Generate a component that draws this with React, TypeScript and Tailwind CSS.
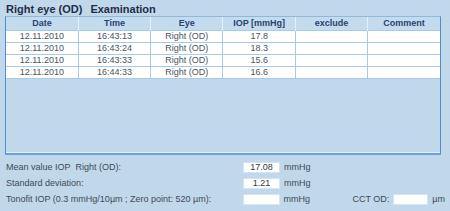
import React from 'react';

const rows = [
  { date: '12.11.2010', time: '16:43:13', eye: 'Right (OD)', iop: '17.8' },
  { date: '12.11.2010', time: '16:43:24', eye: 'Right (OD)', iop: '18.3' },
  { date: '12.11.2010', time: '16:43:33', eye: 'Right (OD)', iop: '15.6' },
  { date: '12.11.2010', time: '16:44:33', eye: 'Right (OD)', iop: '16.6' },
];

const headers = ['Date', 'Time', 'Eye', 'IOP [mmHg]', 'exclude', 'Comment'];

export default function App() {
  return (
    <div
      className="w-[450px] h-[211px] bg-[#c1d8ea] flex flex-col px-[5px] pt-[2px] text-[9px] text-[#3c4a5c] overflow-hidden whitespace-nowrap"
      style={{ fontFamily: '"Liberation Sans", Arial, sans-serif' }}
    >
      {/* Title */}
      <div className="h-[14px] flex items-center gap-[8px] text-[11px] font-bold text-[#1e2d4a] pl-[1px]">
        <span>Right eye (OD)</span>
        <span>Examination</span>
      </div>

      {/* Table box */}
      <div className="w-[436px] h-[139px] border-l border-r border-[#4f8fcb] border-b-2 border-b-[#6aa0d4] border-t border-t-[#8fb8de] shadow-[inset_0_-1px_0_#e2eef8]">
        <table className="w-full table-fixed border-collapse">
          <thead>
            <tr className="h-[13px] bg-[#c4dbee]">
              {headers.map((h) => (
                <th
                  key={h}
                  className="border-r border-[#e6f0f8] last:border-r-0 font-bold text-[9px] text-[#2a4270] leading-[12px]"
                >
                  {h}
                </th>
              ))}
            </tr>
          </thead>
          <tbody>
            {rows.map((r, i) => (
              <tr key={i} className="h-[12px] bg-white">
                <td className="border border-l-0 border-[#a9c9e6] text-center leading-[11px] text-[#4a5564]">{r.date}</td>
                <td className="border border-[#a9c9e6] text-center leading-[11px] text-[#4a5564]">{r.time}</td>
                <td className="border border-[#a9c9e6] text-center leading-[11px] text-[#4a5564]">{r.eye}</td>
                <td className="border border-[#a9c9e6] text-center leading-[11px] text-[#4a5564]">{r.iop}</td>
                <td className="border border-[#a9c9e6] leading-[11px]"></td>
                <td className="border border-r-0 border-[#a9c9e6] leading-[11px]"></td>
              </tr>
            ))}
          </tbody>
        </table>
      </div>

      {/* Summary */}
      <div className="flex flex-col mt-[7px] gap-[5px] pl-[1px]">
        <div className="flex items-center h-[11px]">
          <span className="w-[237px]">Mean value IOP&nbsp;&nbsp;Right (OD):</span>
          <div className="w-[37px] h-[11px] bg-white border border-[#d4e4f2] text-center leading-[9px] text-[#2e3a4a]">17.08</div>
          <span className="ml-[4px]">mmHg</span>
        </div>
        <div className="flex items-center h-[11px]">
          <span className="w-[237px]">Standard deviation:</span>
          <div className="w-[37px] h-[11px] bg-white border border-[#d4e4f2] text-center leading-[9px] text-[#2e3a4a]">1.21</div>
          <span className="ml-[4px]">mmHg</span>
        </div>
        <div className="flex items-center h-[11px]">
          <span className="w-[237px]">Tonofit IOP (0.3 mmHg/10µm ; Zero point: 520 µm):</span>
          <div className="w-[37px] h-[11px] bg-white border border-[#d4e4f2]"></div>
          <span className="ml-[4px] w-[69px]">mmHg</span>
          <span>CCT OD:</span>
          <div className="ml-[4px] w-[35px] h-[11px] bg-white border border-[#d4e4f2]"></div>
          <span className="ml-[4px]">µm</span>
        </div>
      </div>
    </div>
  );
}
